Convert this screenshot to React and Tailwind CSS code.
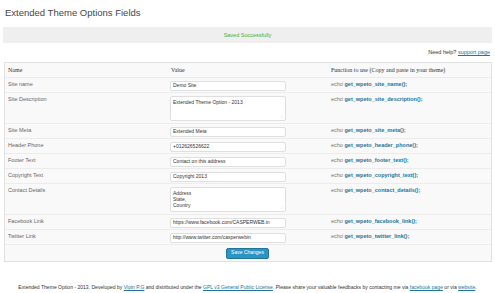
import React from "react";

const rows = [
  { name: "Site name", value: "Demo Site", fn: "get_wpeto_site_name();" },
  { name: "Site Description", value: "Extended Theme Option - 2013", fn: "get_wpeto_site_description();", area: true },
  { name: "Site Meta", value: "Extended Meta", fn: "get_wpeto_site_meta();" },
  { name: "Header Phone", value: "+012626526622", fn: "get_wpeto_header_phone();" },
  { name: "Footer Text", value: "Contact on this address", fn: "get_wpeto_footer_text();" },
  { name: "Copyright Text", value: "Copyright 2013", fn: "get_wpeto_copyright_text();" },
  { name: "Contact Details", value: "Address\nState,\nCountry", fn: "get_wpeto_contact_details();", area: true },
  { name: "Facebook Link", value: "https://www.facebook.com/CASPERWEB.in", fn: "get_wpeto_facebook_link();" },
  { name: "Twitter Link", value: "http://www.twitter.com/casperwebin", fn: "get_wpeto_twitter_link();" },
];

export default function App() {
  return (
    <div className="w-[495px] h-[293px] bg-white overflow-hidden text-[#333]" style={{ fontFamily: '"Liberation Sans", Arial, sans-serif' }}>
      <div className="pl-[5px] pt-[7px] h-[27px] text-[9.5px] leading-[12px] text-[#464646]">Extended Theme Options Fields</div>
      <div className="mx-[3px] h-[16px] bg-[#efefef] flex items-center justify-center text-[5.5px] text-[#3cb043]">
        Saved Successfully
      </div>
      <div className="h-[19px] flex items-center justify-end pr-[5px] text-[5.5px] text-[#333]">
        Need help?&nbsp;<span className="text-[#21759b] underline">support page</span>
      </div>
      <div className="mx-[4px] w-[488px] border border-[#e1e1e1] bg-[#f9f9f9]">
        <div className="flex h-[15px] items-center border-b border-[#ececec] text-[6px] text-[#333]" style={{ fontFamily: '"Liberation Serif", "Times New Roman", serif' }}>
          <div className="w-[163px] pl-[3px]">Name</div>
          <div className="w-[160px] pl-[3px]">Value</div>
          <div className="flex-1 pl-[3px]">Function to use (Copy and paste in your theme)</div>
        </div>
        {rows.map((r, i) => (
          <div key={i} className={`flex border-b border-[#ececec] ${r.area ? "h-[31px]" : "h-[15px]"}`}>
            <div className="w-[163px] pl-[3px] pt-[3px] text-[5.5px] text-[#666] leading-[7px]">{r.name}</div>
            <div className="w-[160px] pl-[2px] pt-[3px]">
              {r.area ? (
                <div className="relative w-[116px] h-[25px] bg-white border border-[#dfdfdf] rounded-[2px] px-[2px] pt-[2px] text-[5px] leading-[6px] text-[#333] whitespace-pre">
                  {r.value}
                  <span className="absolute right-[2px] bottom-[1px] text-[4px] leading-[4px] text-[#aaa]">.:</span>
                </div>
              ) : (
                <div className="w-[116px] h-[10px] bg-white border border-[#dfdfdf] rounded-[2px] px-[2px] flex items-center text-[5px] text-[#333] whitespace-nowrap overflow-hidden">
                  {r.value}
                </div>
              )}
            </div>
            <div className="flex-1 pl-[3px] pt-[3px] text-[5.5px] leading-[7px] text-[#777]">
              echo <span className="text-[#21759b] font-semibold">{r.fn}</span>
            </div>
          </div>
        ))}
        <div className="h-[16px] flex items-center">
          <div className="w-[163px]" />
          <div className="w-[160px] pl-[58px]">
            <div className="w-[43px] h-[11px] rounded-[2px] bg-[#2a95c5] border border-[#21759b] flex items-center justify-center text-[5px] text-white whitespace-nowrap">
              Save Changes
            </div>
          </div>
        </div>
      </div>
      <div className="mt-[22px] text-center text-[5.05px] text-[#333] whitespace-nowrap">
        Extended Theme Option - 2013, Developed by <span className="text-[#21759b] underline">Vipin P.G</span> and distributed under the <span className="text-[#21759b] underline">GPL v3 General Public License</span>. Please share your valuable feedbacks by contacting me via <span className="text-[#21759b] underline">facebook page</span> or via <span className="text-[#21759b] underline">website</span>.
      </div>
    </div>
  );
}
